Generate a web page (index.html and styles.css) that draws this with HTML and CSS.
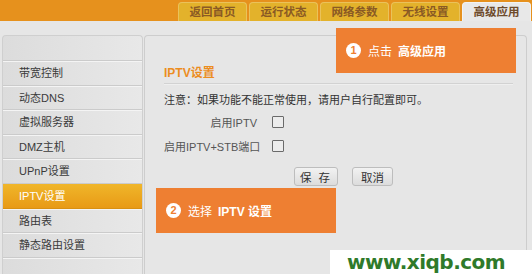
FILE: index.html
```html
<!DOCTYPE html>
<html lang="zh-CN">
<head>
    <meta charset="UTF-8"/>
    <title>高级应用 - IPTV设置</title>
    <link rel="stylesheet" href="styles.css">
</head>
<body>

<div class="topbar">
    <div class="tabs">
        <div class="tab">返回首页</div>
        <div class="tab">运行状态</div>
        <div class="tab">网络参数</div>
        <div class="tab">无线设置</div>
        <div class="tab active">高级应用</div>
    </div>
</div>

<div class="page">
    <div class="sidebar">
        <div class="sidebar-head"></div>
        <div class="menu-item">带宽控制</div>
        <div class="menu-item">动态DNS</div>
        <div class="menu-item">虚拟服务器</div>
        <div class="menu-item">DMZ主机</div>
        <div class="menu-item">UPnP设置</div>
        <div class="menu-item selected">IPTV设置</div>
        <div class="menu-item">路由表</div>
        <div class="menu-item">静态路由设置</div>
        <div class="sidebar-rest"></div>
    </div>

    <div class="content">
        <h3 class="section-title">IPTV设置</h3>
        <p class="note">注意：如果功能不能正常使用，请用户自行配置即可。</p>

        <div class="form-row">
            <label class="form-label">启用IPTV</label>
            <input type="checkbox" class="check"/>
        </div>
        <div class="form-row">
            <label class="form-label">启用IPTV+STB端口</label>
            <input type="checkbox" class="check"/>
        </div>

        <div class="actions">
            <button class="btn btn-save">保 存</button>
            <button class="btn btn-cancel">取消</button>
        </div>
    </div>
</div>

<!-- step hints laid over the screenshot -->
<div class="callout callout-1">
    <span class="step">1</span>
    <span>点击</span>
    <strong>高级应用</strong>
</div>
<div class="callout callout-2">
    <span class="step">2</span>
    <span>选择</span>
    <strong>IPTV 设置</strong>
</div>

<div class="watermark">www.xiqb.com</div>

</body>
</html>
```

FILE: styles.css
```css
* {
    box-sizing: border-box;
}

body {
    margin: 0;
    width: 532px;
    height: 274px;
    overflow: hidden;
    position: relative;
    background: #e6e6e6;
    font-family: "Liberation Sans", "Noto Sans CJK SC", sans-serif;
    font-size: 11px;
    color: #333;
}

.topbar {
    height: 21px;
    background: #e6911d;
    display: flex;
    justify-content: flex-end;
}

.tabs {
    display: flex;
    align-items: flex-end;
    gap: 2px;
    padding-right: 1px;
}

.tab {
    width: 69px;
    height: 19px;
    line-height: 18px;
    text-align: center;
    background: #e3b22b;
    border: 1px solid #eac25a;
    border-bottom: none;
    border-radius: 4px 4px 0 0;
    color: #8a5a24;
    font-weight: bold;
    font-size: 11.5px;
}

.tab.active {
    background: #e8e8e8;
    border-color: #f2f2f2;
    color: #6e4b2c;
}

.page {
    display: flex;
    padding: 14px 5px 0 2px;
    gap: 1px;
}

.sidebar {
    width: 141px;
    height: 239px;
    border: 1px solid #cfcfcf;
    border-bottom: none;
    border-radius: 4px 4px 0 0;
    background: linear-gradient(to right, #dcdcdc, #e8e8e8);
    display: flex;
    flex-direction: column;
}

.sidebar-head {
    height: 25px;
    flex: none;
    border-bottom: 1px solid #cbcbcb;
    box-shadow: 0 1px 0 #f4f4f4;
}

.menu-item {
    height: 24.6px;
    flex: none;
    line-height: 24px;
    padding-left: 16px;
    border-bottom: 1px solid #cbcbcb;
    box-shadow: 0 1px 0 #f4f4f4;
    color: #3a3a3a;
}

.menu-item.selected {
    background: linear-gradient(to bottom, #f0b62a, #e89a16);
    color: #fff;
    border-bottom-color: #d99012;
}

.sidebar-rest {
    flex: 1;
}

.content {
    flex: 1;
    height: 239px;
    border: 1px solid #cdcdcd;
    border-bottom: none;
    border-radius: 4px 4px 0 0;
    padding: 30px 13px 0 19px;
}

.section-title {
    margin: 0;
    font-size: 12px;
    font-weight: bold;
    color: #ec8d1f;
    line-height: 14px;
    padding-bottom: 3px;
    border-bottom: 1px solid #d2d2d2;
    box-shadow: 0 1px 0 #efefef;
}

.note {
    margin: 9px 0 3px;
    line-height: 14px;
    color: #333;
}

.form-row {
    display: flex;
    align-items: center;
    height: 24px;
}

.form-label {
    width: 93px;
    text-align: right;
    white-space: nowrap;
    color: #555;
}

.check {
    appearance: none;
    margin: 0 0 0 15px;
    width: 12px;
    height: 12px;
    border: 1px solid #6a6a6a;
    border-radius: 1px;
    background: #ececec;
}

.actions {
    display: flex;
    gap: 14px;
    padding-left: 130px;
    margin-top: 9px;
}

.btn {
    height: 19px;
    padding: 0;
    border: 1px solid #bdbdbd;
    border-radius: 3px;
    background: linear-gradient(to bottom, #f2f2f2, #dcdcdc);
    font-family: "Liberation Sans", "Noto Sans CJK SC", sans-serif;
    font-size: 11.5px;
    color: #333;
}

.btn-save {
    width: 44px;
    letter-spacing: 2px;
}

.btn-cancel {
    width: 41px;
}

.callout {
    position: absolute;
    width: 180px;
    height: 45px;
    background: #ee7f32;
    color: #fff;
    font-size: 12px;
    display: flex;
    align-items: center;
    gap: 6px;
    padding-left: 10px;
}

.callout-1 {
    left: 336px;
    top: 28px;
}

.callout-2 {
    left: 156px;
    top: 188px;
}

.callout strong {
    font-weight: bold;
}

.step {
    width: 15px;
    height: 15px;
    border-radius: 50%;
    background: #fff;
    color: #ee7f32;
    font-size: 11px;
    font-weight: bold;
    line-height: 15px;
    text-align: center;
    margin-right: 1px;
}

.watermark {
    position: absolute;
    left: 330px;
    top: 250px;
    width: 202px;
    height: 24px;
    background: #fff;
    color: #2f7a2a;
    font-family: "DejaVu Sans", sans-serif;
    font-weight: bold;
    font-size: 20px;
    line-height: 24px;
    padding-left: 17px;
    letter-spacing: -0.5px;
}
```
